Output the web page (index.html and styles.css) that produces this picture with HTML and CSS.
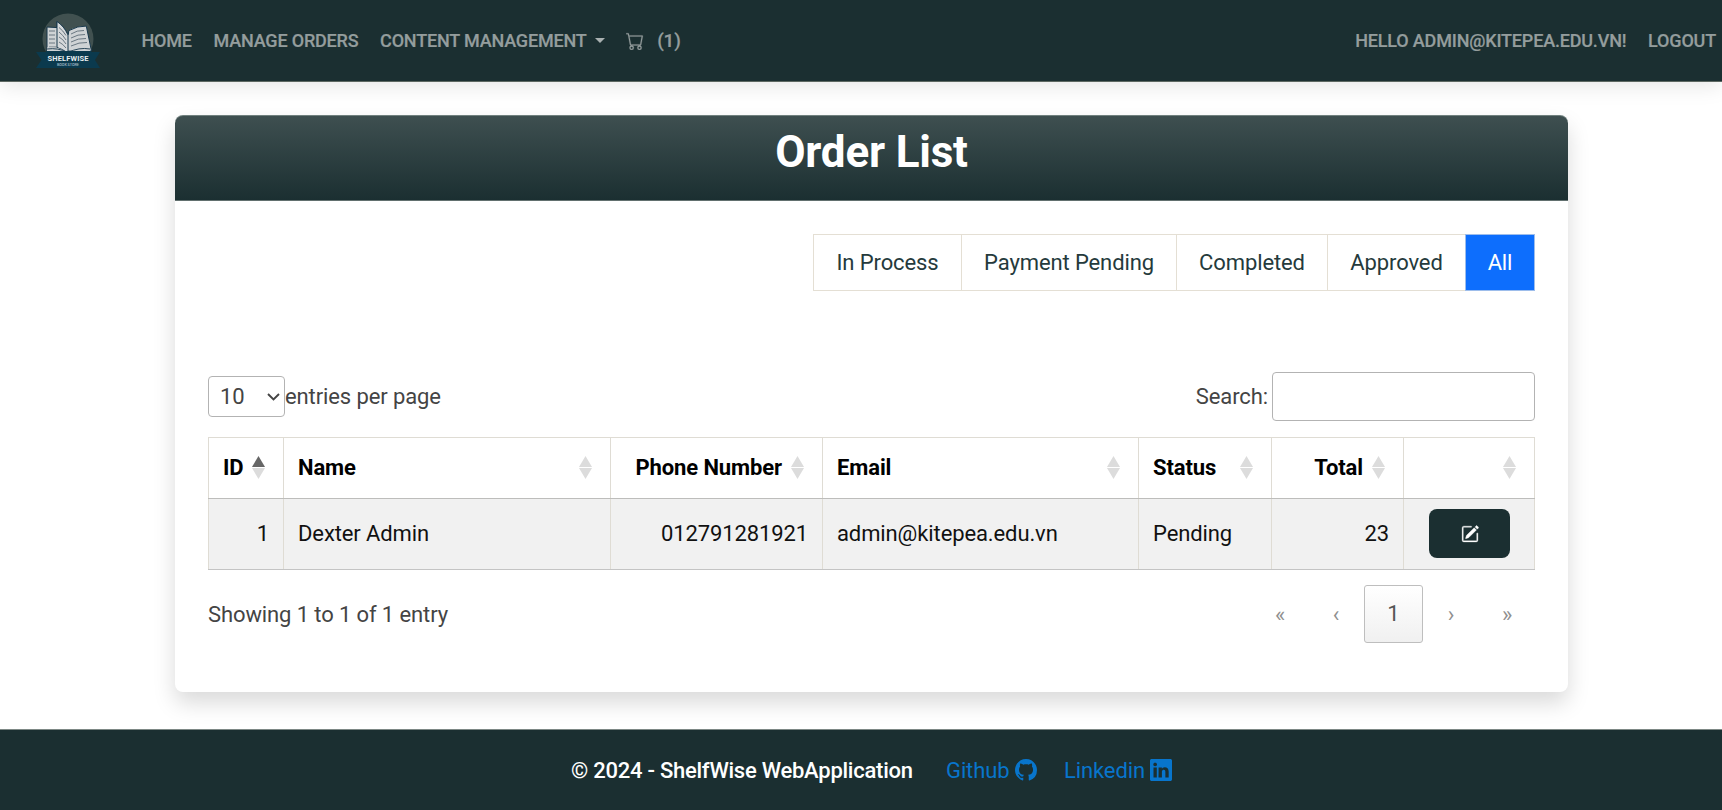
FILE: index.html
```html
<!DOCTYPE html>
<html lang="en">
<head>
<meta charset="utf-8">
<title>Order List - ShelfWise</title>
<link rel="stylesheet" href="styles.css">
</head>
<body>
<header class="navbar">
  <a class="brand">
    <svg width="66" height="60" viewBox="0 0 66 60">
      <circle cx="33" cy="30" r="25.5" fill="#415150"/>
      <path d="M12 18l10 .6-.2-6 6 5 5.500 8 .5-4q9-5 17.500-4.500l5.200 25H12z" fill="#cfd3d5" stroke="#17374b" stroke-width="1"/>
      <path d="M22 18.500v20q6 1.500 11 6V26q-4-9-11-13.500z" fill="#d5d8da" stroke="#17374b"/>
      <g fill="none" stroke="#5d6c77" stroke-width=".9">
        <path d="M14 22h6M14 26h6M14 30h6M14 34h6M14 38h8M24 18.500q4 3 7 8M24 23q4 3 7 8M24 28q4 2 7 7M24 33q4 2 7 6M36 25q6-4 13-3.500M36 29q7-4 14-3.500M36 33q7-4 15-3.500M36 37q8-4 16-3.500"/>
      </g>
      <path d="M12 38.500q11-1 21 5 11-6 22-4v3.500H12z" fill="#cfd3d5"/>
      <path d="M12 40q11-1.500 21 3.500 11-5.500 22-3.500" fill="none" stroke="#17374b" stroke-width=".9"/>
      <path d="M1 43h10v-1h45v1h9l-5 8 5 8H1l5.500-8z" fill="#0b3a4e"/>
      <text x="33" y="51.500" class="logo-name" textLength="41">SHELFWISE</text>
      <text x="33" y="56.500" class="logo-sub" textLength="22">BOOK STORE</text>
    </svg>
  </a>
  <nav class="links">
    <a class="w-home">HOME</a>
    <a class="w-orders">MANAGE ORDERS</a>
    <a class="w-content">CONTENT MANAGEMENT<i class="caret"></i></a>
    <a class="cart"><svg width="18" height="18" viewBox="0 0 16 16" fill="currentColor"><path d="M0 1.500A.5.5 0 0 1 .5 1H2a.5.5 0 0 1 .485.379L2.890 3H14.500a.5.5 0 0 1 .491.592l-1.500 8A.5.5 0 0 1 13 12H4a.5.5 0 0 1-.491-.408L2.010 3.607 1.610 2H.5a.5.5 0 0 1-.5-.5M3.102 4l1.313 7h8.170l1.313-7zM5 12a2 2 0 1 0 0 4 2 2 0 0 0 0-4m7 0a2 2 0 1 0 0 4 2 2 0 0 0 0-4m-7 1a1 1 0 1 1 0 2 1 1 0 0 1 0-2m7 0a1 1 0 1 1 0 2 1 1 0 0 1 0-2"/></svg><span>(1)</span></a>
  </nav>
  <nav class="account"><a>HELLO ADMIN@KITEPEA.EDU.VN!</a><a>LOGOUT</a></nav>
</header>
<main class="card">
  <div class="card-header"><h1>Order List</h1></div>
  <div class="card-body">
    <ul class="filters">
      <li class="f-process">In Process</li><li class="f-pending">Payment Pending</li><li class="f-completed">Completed</li><li class="f-approved">Approved</li><li class="f-all active">All</li>
    </ul>
    <div class="controls">
      <div class="length"><span class="select">10<svg width="13" height="8" viewBox="0 0 13 8"><path d="M1 1l5.500 5.500L12 1" fill="none" stroke="#444" stroke-width="1.900"/></svg></span><span>entries per page</span></div>
      <div class="search"><label for="q">Search:</label><input id="q" type="text"></div>
    </div>
    <table class="orders">
      <colgroup><col class="c-id"><col class="c-name"><col class="c-phone"><col class="c-email"><col class="c-status"><col class="c-total"><col class="c-action"></colgroup>
      <thead><tr>
        <th><div class="head">ID<i class="sort asc"></i></div></th>
        <th><div class="head">Name<i class="sort"></i></div></th>
        <th><div class="head num">Phone Number<i class="sort"></i></div></th>
        <th><div class="head">Email<i class="sort"></i></div></th>
        <th><div class="head">Status<i class="sort"></i></div></th>
        <th><div class="head num">Total<i class="sort"></i></div></th>
        <th><div class="head num"><i class="sort"></i></div></th>
      </tr></thead>
      <tbody><tr>
        <td class="num-cell">1</td><td>Dexter Admin</td><td class="num-cell">012791281921</td><td>admin@kitepea.edu.vn</td><td>Pending</td><td class="num-cell">23</td>
        <td class="action"><a class="edit"><svg width="18" height="18" viewBox="0 0 16 16" fill="currentColor" stroke="currentColor" stroke-width=".3"><path d="M15.502 1.940a.5.5 0 0 1 0 .706L14.459 3.690l-2-2L13.502.646a.5.5 0 0 1 .707 0l1.293 1.293zm-1.750 2.456-2-2L4.939 9.210a.5.5 0 0 0-.121.196l-.805 2.414a.25.25 0 0 0 .316.316l2.414-.805a.5.5 0 0 0 .196-.120l6.813-6.814z"/><path fill-rule="evenodd" d="M1 13.500A1.500 1.500 0 0 0 2.500 15h11a1.500 1.500 0 0 0 1.500-1.500v-6a.5.5 0 0 0-1 0v6a.5.5 0 0 1-.5.5h-11a.5.5 0 0 1-.5-.5v-11a.5.5 0 0 1 .5-.5H9a.5.5 0 0 0 0-1H2.500A1.500 1.500 0 0 0 1 2.500z"/></svg></a></td>
      </tr></tbody>
    </table>
    <div class="bottom">
      <div>Showing 1 to 1 of 1 entry</div>
      <div class="pages"><span>«</span><span>‹</span><span class="current">1</span><span>›</span><span>»</span></div>
    </div>
  </div>
</main>
<footer class="footer">
  <span class="copy">© 2024 - ShelfWise WebApplication</span>
  <a class="github">Github <svg width="22" height="22" viewBox="0 0 16 16" fill="currentColor"><path d="M8 0C3.580 0 0 3.580 0 8c0 3.540 2.290 6.530 5.470 7.590.4.070.55-.17.55-.38 0-.19-.01-.82-.01-1.490-2.010.37-2.530-.49-2.690-.94-.09-.23-.48-.94-.82-1.130-.28-.15-.68-.52-.01-.53.63-.01 1.080.58 1.230.82.72 1.210 1.870.87 2.330.66.07-.52.28-.87.51-1.070-1.780-.2-3.640-.89-3.640-3.950 0-.87.31-1.590.82-2.150-.08-.2-.36-1.020.08-2.120 0 0 .67-.21 2.200.82.64-.18 1.320-.27 2-.27s1.360.09 2 .27c1.530-1.040 2.200-.82 2.200-.82.44 1.100.16 1.920.08 2.120.51.56.82 1.270.82 2.150 0 3.070-1.870 3.750-3.650 3.950.29.25.54.73.54 1.480 0 1.070-.01 1.930-.01 2.200 0 .21.15.46.55.38A8.010 8.010 0 0 0 16 8c0-4.420-3.580-8-8-8"/></svg></a>
  <a class="linkedin">Linkedin <svg width="22" height="22" viewBox="0 0 16 16" fill="currentColor"><path d="M0 1.146C0 .513.526 0 1.175 0h13.650C15.474 0 16 .513 16 1.146v13.708c0 .633-.526 1.146-1.175 1.146H1.175C.526 16 0 15.487 0 14.854zm4.943 12.248V6.169H2.542v7.225zm-1.200-8.212c.837 0 1.358-.554 1.358-1.248-.015-.709-.520-1.248-1.342-1.248S2.400 3.226 2.400 3.934c0 .694.521 1.248 1.327 1.248zm4.908 8.212V9.359c0-.216.016-.432.080-.586.173-.431.568-.878 1.232-.878.869 0 1.216.662 1.216 1.634v3.865h2.401V9.250c0-2.220-1.184-3.252-2.764-3.252-1.274 0-1.845.7-2.165 1.193v.025h-.016l.016-.025V6.169h-2.400c.03.678 0 7.225 0 7.225z"/></svg></a>
</footer>
</body>
</html>
```
FILE: styles.css
```css
* { box-sizing: border-box; }
body { margin: 0; height: 810px; display: flex; flex-direction: column; overflow: hidden; background: #fff; font-family: Roboto, "Liberation Sans", sans-serif; font-size: 22px; letter-spacing: -.11px; color: #444; white-space: nowrap; }
.navbar { height: 82px; flex: none; display: flex; align-items: center; padding: 0 6px 0 35px; background: #1b2f31; border-bottom: 1px solid #5d6862; box-shadow: 0 4px 20px rgba(0,0,0,.1); color: #949d9d; font-size: 18px; font-weight: 500; letter-spacing: -.18px; -webkit-text-stroke: .2px; }
.brand { width: 106.500px; height: 60px; margin-top: -3px; -webkit-text-stroke: 0; letter-spacing: 0; }
.brand svg { display: block; }
.logo-name { font-size: 7.500px; font-weight: 700; fill: #e8eef0; text-anchor: middle; }
.logo-sub { font-size: 3.800px; fill: #a3bcc6; text-anchor: middle; }
.links { display: flex; gap: 21.600px; }
.links a { display: flex; align-items: center; }
.caret { border: 5px solid transparent; border-top-color: #aab1b1; border-bottom: 0; margin-left: 8px; }
.cart svg { stroke: currentColor; stroke-width: .2; }
.cart span { margin-left: 13px; font-size: 19px; }
.account { margin-left: auto; display: flex; gap: 21.800px; }
.card { width: 1393px; height: 577px; flex: none; margin: 33px 0 0 175px; border-radius: 8px; background: #fff; box-shadow: 0 11px 22px rgba(0,0,0,.15); }
.card-header { height: 86px; border: 1px solid #62706f; border-top-color: #70807e; border-width: 1px 0; border-radius: 8px 8px 0 0; background: linear-gradient(#3e4f50, #1b2f31); text-align: center; }
h1 { margin: 0; padding-top: 10px; font-size: 44px; line-height: 53px; font-weight: 700; letter-spacing: -.2px; color: #fff; }
.card-body { padding: 33px 33px 0; }
.filters { list-style: none; margin: 0; padding: 0; display: flex; justify-content: flex-end; color: #253a3c; }
.filters li { height: 57px; line-height: 55px; text-align: center; border: 1px solid #e4dfd4; border-right-width: 0; }
.f-process { width: 148px; }
.f-pending { width: 215px; }
.f-completed { width: 151px; }
.f-approved { width: 138px; }
.filters .f-all { width: 70px; border-right-width: 1px; }
.filters .active { background: #0d6efd; border-color: #9dbdeb; color: #fff; }
.controls { height: 49px; margin-top: 81px; display: flex; justify-content: space-between; align-items: center; }
.length { display: flex; align-items: center; }
.select { width: 77px; height: 41px; padding: 0 4px 0 11px; display: flex; align-items: center; justify-content: space-between; border: 1px solid #b3b3b3; border-radius: 4px; }
.search { display: flex; align-items: center; gap: 4px; }
.search input { width: 263px; height: 49px; border: 1px solid #b3b3b3; border-radius: 4px; background: #fff; }
.orders { width: 1327px; margin-top: 16px; table-layout: fixed; border-collapse: collapse; color: #111; }
.c-id { width: 75px; }
.c-name { width: 327px; }
.c-phone { width: 212px; }
.c-email { width: 316px; }
.c-status { width: 133px; }
.c-total { width: 132px; }
.c-action { width: 131px; }
.orders th, .orders td { padding: 0 14px 1px; text-align: left; border: 1px solid #dfdcd4; }
.orders th { height: 61px; padding-right: 18px; border-bottom-color: #bdbdbb; color: #000; font-weight: 700; }
.orders td { height: 71px; padding-bottom: 2px; background: #f1f1f1; border-bottom-color: #c4c4c4; }
.orders .num-cell { text-align: right; }
.head { display: flex; align-items: center; justify-content: space-between; }
.num { justify-content: flex-end; gap: 9px; }
.sort { width: 13px; height: 23px; display: flex; flex-direction: column; justify-content: space-between; }
.sort::before, .sort::after { content: ""; height: 11px; background: #dcdcdc; }
.sort::before { clip-path: polygon(50% 0, 100% 100%, 0 100%); }
.sort::after { clip-path: polygon(0 0, 100% 0, 50% 100%); }
.sort.asc::before { background: #666; }
.orders .action { padding: 0 0 1px 25px; }
.edit { display: flex; width: 81px; height: 49px; align-items: center; justify-content: center; background: #1b2f31; border-radius: 8px; color: #fff; }
.bottom { display: flex; justify-content: space-between; align-items: center; height: 58px; margin-top: 15px; }
.pages { display: flex; align-items: center; color: #8f8f8f; }
.pages span { width: 56px; text-align: center; }
.pages .current { width: 59px; height: 58px; line-height: 56px; border: 1px solid #bebebe; border-radius: 3px; background: linear-gradient(#fff, #f0f0f0); color: #555; }
.footer { height: 81px; flex: none; margin-top: 37px; padding-left: 571px; display: flex; align-items: center; background: #1b2f31; border-top: 1px solid #7d8885; color: #fff; }
.copy { font-weight: 500; width: 375px; letter-spacing: -.25px; }
.footer a { display: flex; align-items: center; justify-content: space-between; color: #0875cc; }
.github { width: 91px; margin-right: 27px; }
.linkedin { width: 108px; }
```
